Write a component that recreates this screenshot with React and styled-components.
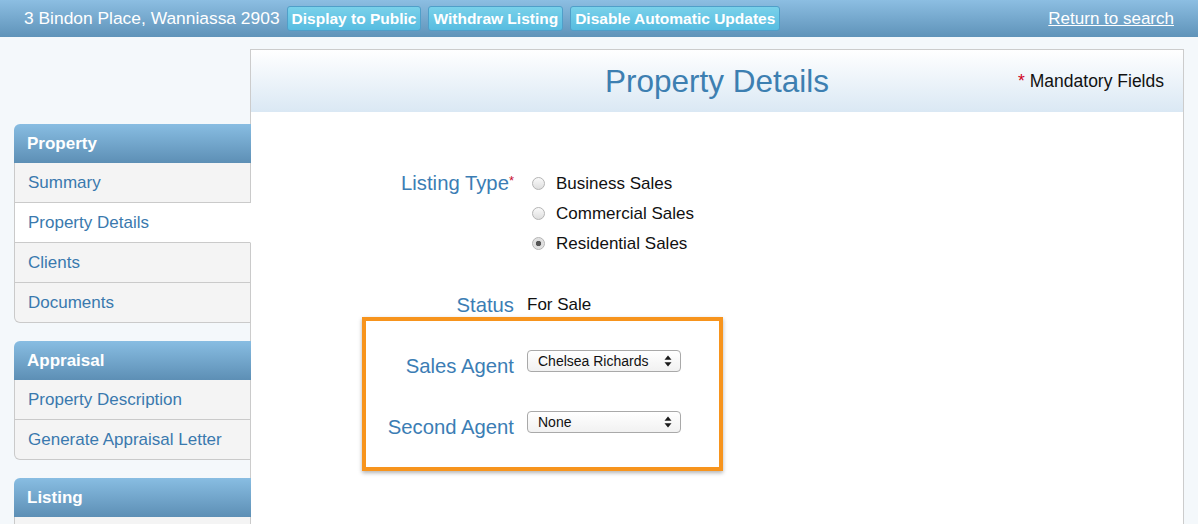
import React, { useState } from "react";
import styled, { createGlobalStyle } from "styled-components";

const GlobalStyle = createGlobalStyle`
  html, body {
    margin: 0;
    padding: 0;
    background: #f4f8fb;
    font-family: "Liberation Sans", Arial, sans-serif;
  }
  * { box-sizing: border-box; }
`;

const navGroups = [
  { title: "Property", items: ["Summary", "Property Details", "Clients", "Documents"] },
  { title: "Appraisal", items: ["Property Description", "Generate Appraisal Letter"] },
  { title: "Listing", items: [""] },
];

const listingTypes = ["Business Sales", "Commercial Sales", "Residential Sales"];

const App = () => {
  const [listingType, setListingType] = useState("Residential Sales");
  const [active] = useState("Property Details");

  return (
    <>
      <GlobalStyle />
      <TopBar>
        <Address>3 Bindon Place, Wanniassa 2903</Address>
        <BarButton>Display to Public</BarButton>
        <BarButton>Withdraw Listing</BarButton>
        <BarButton>Disable Automatic Updates</BarButton>
        <ReturnLink href="#">Return to search</ReturnLink>
      </TopBar>
      <Main>
        <Sidebar>
          {navGroups.map((group) => (
            <NavGroup key={group.title}>
              <NavHeader>{group.title}</NavHeader>
              {group.items.map((item, i) => (
                <NavItem key={i} $active={item === active}>
                  {item}
                </NavItem>
              ))}
            </NavGroup>
          ))}
        </Sidebar>
        <Panel>
          <PanelHeader>
            <Title>Property Details</Title>
            <Mandatory>
              <Req>*</Req> Mandatory Fields
            </Mandatory>
          </PanelHeader>
          <Form>
            <Row $pad>
              <Label>
                Listing Type<Star>*</Star>
              </Label>
              <Options>
                {listingTypes.map((t) => (
                  <Option key={t} onClick={() => setListingType(t)}>
                    <Radio $checked={t === listingType} />
                    {t}
                  </Option>
                ))}
              </Options>
            </Row>
            <StatusRow $pad>
              <Label>Status</Label>
              <Value>For Sale</Value>
            </StatusRow>
            <Highlight>
              <AgentRow>
                <Label $low>Sales Agent</Label>
                <SelectBox value="Chelsea Richards" />
              </AgentRow>
              <AgentRow>
                <Label $low>Second Agent</Label>
                <SelectBox value="None" />
              </AgentRow>
            </Highlight>
          </Form>
        </Panel>
      </Main>
    </>
  );
};

const SelectBox = ({ value }) => (
  <SelectWrap>
    <span>{value}</span>
    <svg width="8" height="12" viewBox="0 0 8 12">
      <polygon points="0.5,4.8 4,0.5 7.5,4.8" fill="#1a1a1a" />
      <polygon points="0.5,7.2 4,11.5 7.5,7.2" fill="#1a1a1a" />
    </svg>
  </SelectWrap>
);

const TopBar = styled.div`
  height: 37px;
  display: flex;
  align-items: center;
  gap: 7px;
  padding: 0 24px;
  background: linear-gradient(#8cbee2, #5f93b9);
`;

const Address = styled.div`
  color: #fff;
  font-size: 17.4px;
`;

const BarButton = styled.button`
  height: 25px;
  padding: 0 4px;
  border: 1px solid #4f9fc9;
  border-radius: 3px;
  background: linear-gradient(#79d1ea, #57bce0);
  color: #fff;
  font-family: "Liberation Sans", Arial, sans-serif;
  font-weight: bold;
  font-size: 15.5px;
  cursor: pointer;
`;

const ReturnLink = styled.a`
  margin-left: auto;
  color: #fff;
  font-size: 17px;
  text-decoration: underline;
`;

const Main = styled.div`
  display: flex;
  padding: 12px 14px 0;
  height: 487px;
  overflow: hidden;
`;

const Sidebar = styled.div`
  width: 237px;
  flex-shrink: 0;
  margin-top: 75px;
  margin-right: -1px;
  position: relative;
  z-index: 1;
  display: flex;
  flex-direction: column;
  gap: 18px;
`;

const NavGroup = styled.div`
  display: flex;
  flex-direction: column;
  & > div:last-child {
    border-bottom-left-radius: 6px;
  }
`;

const NavHeader = styled.div`
  height: 39px;
  display: flex;
  align-items: center;
  padding-left: 13px;
  color: #fff;
  font-weight: bold;
  font-size: 17px;
  border-top-left-radius: 6px;
  background: linear-gradient(#88bde2, #5d8fb5);
`;

const NavItem = styled.div`
  height: 40px;
  display: flex;
  align-items: center;
  padding: 1px 0 0 13px;
  font-size: 17px;
  color: #3a79ae;
  background: ${(p) => (p.$active ? "#fff" : "#f4f4f4")};
  border: 1px solid #cacaca;
  border-top: none;
  border-right-color: ${(p) => (p.$active ? "#fff" : "#cacaca")};
`;

const Panel = styled.div`
  flex: 1;
  background: #fff;
  border: 1px solid #cccccc;
  border-bottom: none;
`;

const PanelHeader = styled.div`
  height: 62px;
  position: relative;
  display: flex;
  align-items: center;
  justify-content: center;
  background: linear-gradient(#ffffff, #dae8f4);
`;

const Title = styled.h1`
  margin: 0;
  font-weight: normal;
  font-size: 31.5px;
  color: #3d7fb1;
`;

const Mandatory = styled.div`
  position: absolute;
  right: 19px;
  top: 21px;
  font-size: 17.5px;
  color: #111;
`;

const Req = styled.span`
  color: #d0021b;
`;

const Form = styled.div`
  margin: 56px 0 0 111px;
  display: flex;
  flex-direction: column;
`;

const Row = styled.div`
  display: grid;
  grid-template-columns: 148px 1fr;
  column-gap: 13px;
  padding-left: ${(p) => (p.$pad ? "4px" : "0")};
`;

const StatusRow = styled(Row)`
  margin-top: 35px;
  line-height: 24px;
`;

const Label = styled.div`
  text-align: right;
  font-size: 20.3px;
  color: #3b7db4;
  line-height: ${(p) => (p.$low ? "22px" : "30px")};
  white-space: nowrap;
  padding-top: ${(p) => (p.$low ? "5px" : "0")};
  ${StatusRow} & {
    line-height: 24px;
  }
`;

const Star = styled.sup`
  color: #c8102e;
  font-size: 13px;
  vertical-align: 5px;
  line-height: 0;
`;

const Options = styled.div`
  display: flex;
  flex-direction: column;
`;

const Option = styled.label`
  height: 30px;
  display: flex;
  align-items: center;
  gap: 11px;
  padding: 1px 0 0 5px;
  font-size: 17px;
  color: #111;
  cursor: pointer;
`;

const Radio = styled.span`
  width: 13px;
  height: 13px;
  border-radius: 50%;
  border: 1px solid #b4b4b4;
  background: ${(p) =>
    p.$checked
      ? "radial-gradient(circle, #555 0 2.4px, #dcdcdc 3px, #ececec)"
      : "linear-gradient(#fafafa, #dedede)"};
`;

const Value = styled.div`
  font-size: 17px;
  color: #111;
`;

const Highlight = styled.div`
  width: 361px;
  border: 4px solid #f7941d;
  box-shadow: 0 2px 4px rgba(0, 0, 0, 0.3);
  padding: 29px 0 29px;
  display: flex;
  flex-direction: column;
  gap: 34px;
`;

const AgentRow = styled(Row)`
  align-items: start;
`;

const SelectWrap = styled.div`
  width: 154px;
  height: 22px;
  display: flex;
  align-items: center;
  justify-content: space-between;
  padding: 0 8px 0 10px;
  border: 1px solid #a9a9a9;
  border-radius: 4px;
  background: linear-gradient(#ffffff, #f1f1f1);
  font-size: 14px;
  color: #111;
`;

export default App;
